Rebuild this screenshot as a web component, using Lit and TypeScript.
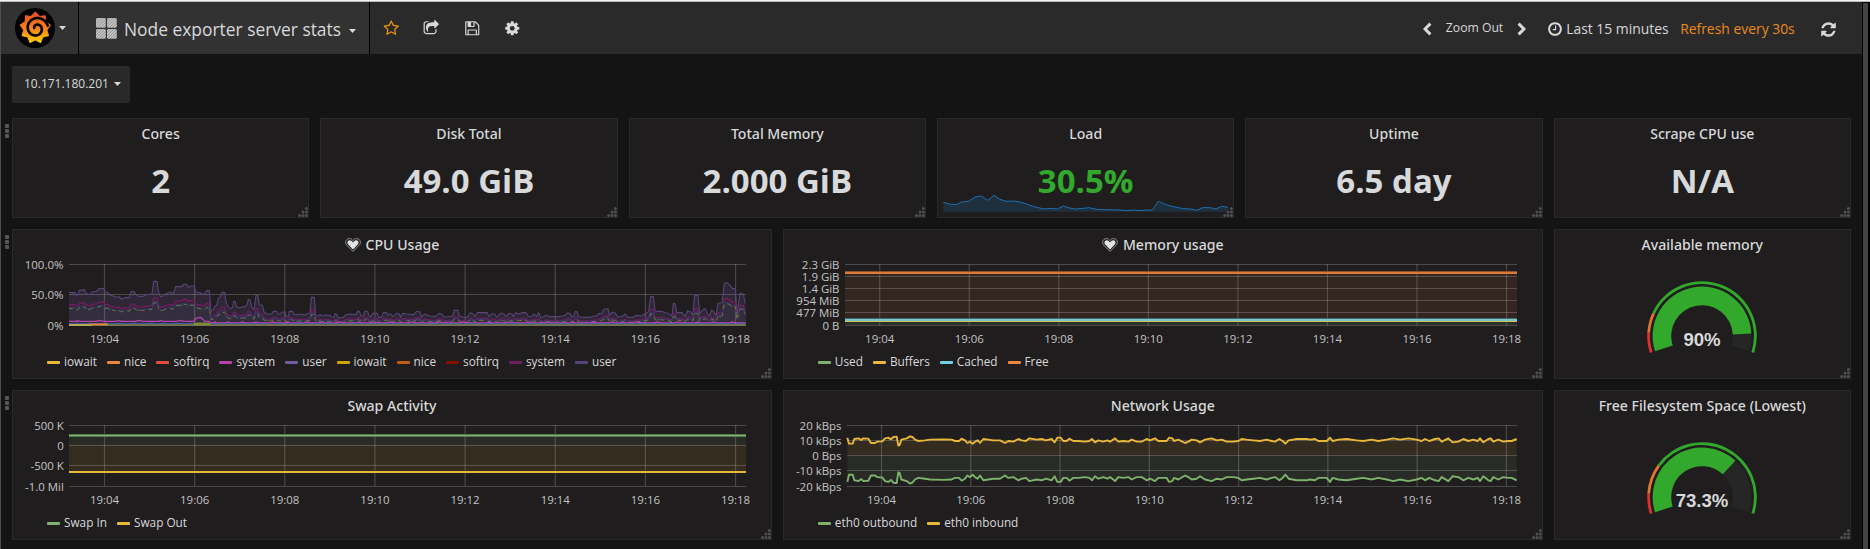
import { LitElement, html, svg, css, nothing } from "lit";

type Pt = [number, number];

const parse = (s: string): Pt[] =>
  s.trim().split(/\s+/).map((p) => p.split(",").map(Number) as Pt);
const shift = (pts: Pt[], dx: number): Pt[] => pts.map(([x, y]) => [x + dx, y] as Pt);
const join = (pts: Pt[]) => pts.map(([x, y]) => `${x.toFixed(2)},${y.toFixed(2)}`).join(" ");

/* FontAwesome glyph outlines, 1792 unit grid */
const ICON = {
  star: "M1201 1004l306-297-422-62-189-382-189 382-422 62 306 297-73 421 378-199 377 199zm527-357q0 22-26 48l-363 354 86 500q1 7 1 20 0 50-41 50-19 0-40-12l-449-236-449 236q-22 12-40 12-21 0-31.5-14.5t-10.5-35.5q0-6 2-20l86-500-364-354q-25-27-25-48 0-37 56-46l502-73 225-455q19-41 49-41t49 41l225 455 502 73q56 9 56 46z",
  share: "M1472 989v259q0 119-84.5 203.5t-203.5 84.5h-832q-119 0-203.5-84.5t-84.5-203.5v-832q0-119 84.5-203.5t203.5-84.5h255q13 0 22.5 9.5t9.5 22.5q0 27-26 32-77 26-133 60-10 4-16 4h-112q-66 0-113 47t-47 113v832q0 66 47 113t113 47h832q66 0 113-47t47-113v-214q0-19 18-29 28-13 54-37 16-16 35-8 21 9 21 29zm237-496l-384 384q-18 19-45 19-12 0-25-5-39-17-39-59v-192h-160q-323 0-438 131-119 137-74 473 3 23-20 34-8 2-12 2-16 0-26-13-10-14-21-31t-39.5-68.5-49.5-99.5-38.5-114-17.5-122q0-49 3.5-91t14-90 28-88 47-81.5 68.5-74 94.5-61.5 124.5-48.5 159.5-30.5 196.5-11h160v-192q0-42 39-59 13-5 25-5 26 0 45 19l384 384q19 19 19 45t-19 45z",
  save: "M512 1536h768v-384h-768v384zm896 0h128v-896q0-14-10-38.5t-20-34.5l-281-281q-10-10-34-20t-39-10v416q0 40-28 68t-68 28h-576q-40 0-68-28t-28-68v-416h-128v1280h128v-416q0-40 28-68t68-28h832q40 0 68 28t28 68v416zm-384-928v-320q0-13-9.5-22.5t-22.5-9.5h-192q-13 0-22.5 9.5t-9.5 22.5v320q0 13 9.5 22.5t22.5 9.5h192q13 0 22.5-9.5t9.5-22.5zm640 32v928q0 40-28 68t-68 28h-1344q-40 0-68-28t-28-68v-1344q0-40 28-68t68-28h928q40 0 88 20t76 48l280 280q28 28 48 76t20 88z",
  cog: "M1152 896q0-106-75-181t-181-75-181 75-75 181 75 181 181 75 181-75 75-181zm512-109v222q0 12-8 23t-20 13l-185 28q-19 54-39 91 35 50 107 138 10 12 10 25t-9 23q-27 37-99 108t-94 71q-12 0-26-9l-138-108q-44 23-91 38-16 136-29 186-7 28-36 28h-222q-14 0-24.5-8.5t-11.5-21.5l-28-184q-49-16-90-37l-141 107q-10 9-25 9-14 0-25-11-126-114-165-168-7-10-7-23 0-12 8-23 15-21 51-66.5t54-70.5q-27-50-41-99l-183-27q-13-2-21-12.5t-8-23.5v-222q0-12 8-23t19-13l186-28q14-46 39-92-40-57-107-138-10-12-10-24 0-10 9-23 26-36 98.5-107.5t94.5-71.5q13 0 26 10l138 107q44-23 91-38 16-136 29-186 7-28 36-28h222q14 0 24.5 8.5t11.5 21.5l28 184q49 16 90 37l142-107q9-9 24-9 13 0 25 10 129 119 165 170 7 8 7 22 0 12-8 23-15 21-51 66.5t-54 70.5q26 50 41 98l183 28q13 2 21 12.5t8 23.5z",
  clock: "M1024 544v448q0 14-9 23t-23 9h-320q-14 0-23-9t-9-23v-64q0-14 9-23t23-9h224v-352q0-14 9-23t23-9h64q14 0 23 9t9 23zm416 352q0-148-73-273t-198-198-273-73-273 73-198 198-73 273 73 273 198 198 273 73 273-73 198-198 73-273zm224 0q0 209-103 385.5t-279.5 279.5-385.5 103-385.5-103-279.5-279.5-103-385.5 103-385.5 279.5-279.5 385.5-103 385.5 103 279.5 279.5 103 385.5z",
  refresh: "M1639 1056q0 5-1 7-64 268-268 434.5t-478 166.5q-146 0-282.5-55t-243.5-157l-129 129q-19 19-45 19t-45-19-19-45v-448q0-26 19-45t45-19h448q26 0 45 19t19 45-19 45l-137 137q71 66 161 102t187 36q134 0 250-65t186-179q11-17 53-117 8-23 30-23h192q13 0 22.5 9.5t9.5 22.5zm25-800v448q0 26-19 45t-45 19h-448q-26 0-45-19t-19-45 19-45l138-138q-148-137-349-137-134 0-250 65t-186 179q-11 17-53 117-8 23-30 23h-199q-13 0-22.5-9.5t-9.5-22.5v-7q65-268 270-434.5t480-166.5q146 0 284 55.5t245 156.5l130-129q19-19 45-19t45 19 19 45z",
};

const fa = (d: string, size = 16.5) =>
  html`<svg class="fa" width=${size} height=${size} viewBox="0 0 1792 1792"><path d=${d} fill="currentColor" /></svg>`;
const caret = html`<svg class="caret" width="7" height="4" viewBox="0 0 7 4"><path d="M0 0H7L3.5 4Z" fill="currentColor" /></svg>`;
const chevron = (flip: boolean) => html`<svg width="9" height="14" viewBox="0 0 9 14">
  <path d=${flip ? "M1.6 1.6L7 7L1.6 12.4" : "M7.4 1.6L2 7L7.4 12.4"} fill="none" stroke="currentColor" stroke-width="3" />
</svg>`;
const heart = html`<svg class="heart" width="16" height="14" viewBox="0 0 16 14">
  <path d="M8 13.4L1.8 7.2C-.4 4.8.6.7 4.4.6 6 .6 7.2 1.3 8 2.6 8.8 1.3 10 .6 11.6.6 15.4.7 16.4 4.8 14.2 7.2Z" fill="none" stroke="#9b9b9b" stroke-width=".9" />
  <path d="M8 11.6L3.2 6.6C1.8 4.9 2.5 2.3 4.7 2.2 6.3 2.2 7.3 3.2 8 4.6 8.7 3.2 9.7 2.2 11.3 2.2 13.5 2.3 14.2 4.9 12.8 6.6Z" fill="#e4e4e4" />
</svg>`;
const grip = html`<svg class="grip" width="10" height="10" viewBox="0 0 10 10" fill="#505050">
  ${([[8.4, 1.6], [8.4, 5], [8.4, 8.4], [5, 5], [5, 8.4], [1.6, 8.4]] as Pt[]).map(
    ([x, y]) => svg`<circle cx=${x} cy=${y} r="1.5" />`
  )}
</svg>`;

/* Logo: toothed flame with a spiral cut into it */
const flame = () => {
  const pts: Pt[] = [];
  const n = 9;
  for (let i = 0; i < n * 2; i++) {
    const a = (-90 + (i * 180) / n) * (Math.PI / 180);
    const r = i % 2 ? 12 : 15.6;
    pts.push([20.3 + r * 0.97 * Math.cos(a), 19.8 + r * Math.sin(a)]);
  }
  return join(pts);
};
const spiral = () => {
  const pts: Pt[] = [];
  for (let t = 0; t <= 1; t += 0.01) {
    const a = -0.35 - (1 - t) * Math.PI * 2.9 + 0.2;
    const r = 2.2 + t * 9.6;
    pts.push([21.4 + r * Math.cos(a), 20.4 + r * Math.sin(a)]);
  }
  return join(pts);
};
const logo = html`<svg width="40" height="40" viewBox="0 0 40 40">
  <defs>
    <linearGradient id="lg" x1="0" y1="0" x2="0" y2="1">
      <stop offset="0" stop-color="#ef4e28" /><stop offset=".5" stop-color="#f47b20" /><stop offset="1" stop-color="#fdca0a" />
    </linearGradient>
  </defs>
  <circle cx="20" cy="20" r="20" fill="#000" />
  <polygon points=${flame()} fill="url(#lg)" stroke="url(#lg)" stroke-width="1.2" stroke-linejoin="round" />
  <polyline points=${spiral()} fill="none" stroke="#000" stroke-width="2.6" stroke-linecap="round" />
</svg>`;

const tiles = html`<svg width="21" height="21" viewBox="0 0 21 21">
  <defs>
    <pattern id="hatch" width="2.1" height="2.1" patternUnits="userSpaceOnUse" patternTransform="rotate(45)">
      <rect width="2.1" height="2.1" fill="#8e8e8e" /><rect width="1.2" height="2.1" fill="#cfcfcf" />
    </pattern>
  </defs>
  ${([[0, 0], [11, 0], [0, 11], [11, 11]] as Pt[]).map(
    ([x, y]) => svg`<rect x=${x} y=${y} width="9.8" height="9.8" rx="1.4" fill="url(#hatch)" />`
  )}
</svg>`;

/* ---- series, traced on a grid of one third of a pixel ---- */
const cpuTop: Pt[] = [
  ...parse(`207,212 226,212 229,220 234,218 238,205 254,203 258,214 270,218 275,210 290,208 296,200 312,200 316,210 325,212 332,220 340,222 348,226 357,224 365,231 375,227 388,227 393,209 403,209 408,218 415,223 430,223 438,218 456,216 461,178 471,178 476,212 482,224 490,222 495,216 505,213 512,210 520,216 527,194 545,194 550,187 560,187 565,196 572,192 582,192 587,210 600,212 606,216 614,216 620,206 628,206 633,266 640,264 645,252 650,250 655,228 660,226 665,211 674,211 678,240 684,254 692,260 698,256 701,238 706,240 710,255 720,257 727,254 735,255 740,250 745,232 750,234 755,256 762,262 768,220 773,220 778,248 787,250 792,270 800,276 815,276 820,268 830,268 835,276 842,276 846,270 855,270 858,282 865,284 868,268 878,268 882,277 893,278 905,276 912,280 920,276 930,274 934,226 943,226 947,280 955,282 960,277 967,282 975,279 988,280 995,284 1002,286 1005,275 1010,276 1015,288 1030,286 1037,278 1050,276 1062,278 1068,278 1073,267 1078,268 1083,282 1090,282 1094,268 1103,268 1106,280 1112,286 1118,274 1132,274 1136,286 1145,286 1150,272 1160,272 1164,280`),
  ...shift(parse(`0,275 10,284 20,274 28,276 32,286 38,274 50,276 70,278 80,268 90,270 95,286 103,276 120,282 135,284 148,274 158,278 163,286 188,282 192,265 204,265 208,282 220,286 232,286 240,272 250,276 255,284 262,272 292,272 297,284 305,276 314,276 320,286 332,274 342,276 348,284 356,274 366,276 370,284 378,272 388,276 396,272 408,272 414,282 424,284 432,276 440,284 446,272 452,286 462,284 468,280 480,284 496,284 510,284 525,280 534,272 542,276 546,286 552,280 556,268 562,270 566,284 580,286 600,286 612,282 620,282 626,274 634,276 642,262 654,260 658,280 666,270 676,274 684,286 698,282 706,276 714,286 730,286 740,280 755,282 768,274 776,268 782,224 790,224 795,266 800,268 815,268 825,272 835,274 846,282 850,244 856,246 860,272 876,272 885,284 893,266 902,270 908,280 914,220 924,220 929,276 938,264 946,260 952,275 958,282 965,264 972,270 978,282 984,244 996,242 1003,184 1012,182 1020,190 1027,200 1036,200 1041,278 1050,214 1060,216 1065,242 1067,242`), 1170),
].map(([x, y]) => [x / 3, 222 + y / 3] as Pt);
const CPU_BASE = 325.3;
const scaled = (early: number, late: number): Pt[] =>
  cpuTop.map(([x, y]) => [x, CPU_BASE - (CPU_BASE - y) * (x < 211 || x > 722 ? early : late)] as Pt);
const cpuSystem2 = scaled(0.63, 0.55);
const cpuSoft2 = scaled(0.54, 0.45);
const cpuWait2 = scaled(0.51, 0.39);
const cpuSystem1 = cpuTop.map(([x, y], i) => [x, CPU_BASE - (x < 211 ? 3.9 : 2.4) - (i % 7 === 3 ? 1 : 0) - (x > 194 && x < 204 ? 3 : 0)] as Pt);
const cpuBlue = cpuTop.map(([x], i) => [x, CPU_BASE - 1.4 - (i % 5 === 2 ? 0.7 : 0)] as Pt);

const netIn: Pt[] = [
  ...parse(`232,158 237,176 248,176 253,162 266,160 274,165 280,160 295,161 303,174 315,174 322,170 337,169 345,160 355,158 363,163 370,156 380,155 385,182 389,180 394,164 410,160 420,154 427,156 435,164 445,168 465,166 480,164 520,163 545,164 555,168 567,168 575,161 585,166 592,174 600,170 608,176 615,170 623,166 630,174 640,162 655,164 670,166 690,166 705,174 715,168 730,170 745,162 755,166 768,168 778,160 800,164 815,162 828,166 845,162 854,172 862,158 872,158 880,168 890,168 898,161 910,168 925,168 945,170 958,168 966,162 975,172 985,166 1000,170 1012,166 1020,170 1035,160 1045,170 1060,168 1075,170 1085,164 1100,170 1115,170 1130,162 1140,166 1155,160 1165,168`),
  ...shift(parse(`0,168 20,168 27,158 37,160 42,168 55,164 75,174 85,170 95,164 110,166 120,172 135,164 155,160 170,166 185,164 200,170 220,170 235,168 245,162 260,164 280,166 300,168 320,164 335,168 345,170 358,162 368,168 376,176 386,166 410,162 440,162 450,164 465,162 475,168 500,168 510,158 518,168 535,164 560,162 590,166 610,168 635,164 655,168 680,164 700,160 720,164 745,160 770,164 785,168 795,162 808,168 825,162 836,160 845,170 865,160 878,172 895,170 910,162 925,168 940,164 953,168 960,160 970,172 985,162 992,160 1000,170 1015,164 1030,170 1045,168 1055,168 1070,162`), 1170),
].map(([x, y]) => [770 + x / 3, 385 + y / 3] as Pt);
const netOut = netIn.map(([x, y]) => [x, 478.5 - (y - 440.5) * 1.2] as Pt);

const load: Pt[] = parse(`130,292 148,297 168,299 186,291 206,289 225,276 244,273 263,286 282,271 300,283 318,289 340,288 360,291 380,297 398,304 415,308 433,312 450,310 472,312 490,303 508,309 528,312 548,310 568,308 588,313 605,314 660,315 682,317 700,315 718,317 738,315 757,315 775,289 793,297 812,303 830,307 850,311 872,312 890,316 908,308 930,308 948,312 965,304 984,307`).map(
  ([x, y]) => [900 + x / 3, 105 + y / 3] as Pt
);

const line = (pts: Pt[], color: string, w = 1) =>
  svg`<polyline points=${join(pts)} fill="none" stroke=${color} stroke-width=${w} stroke-linejoin="round" />`;
const area = (pts: Pt[], base: number, color: string, o = 1) =>
  svg`<polygon points=${join([[pts[0][0], base], ...pts, [pts[pts.length - 1][0], base]])} fill=${color} fill-opacity=${o} />`;
const flat = (x0: number, x1: number, y: number, color: string, w = 2) =>
  svg`<rect x=${x0} y=${y - w / 2} width=${x1 - x0} height=${w} fill=${color} />`;

interface Axis { left: number; right: number; ys: number[]; labels: string[]; labelX: number; first: number; step: number; }

const times = ["19:04", "19:06", "19:08", "19:10", "19:12", "19:14", "19:16", "19:18"];

const plot = (ox: number, oy: number, a: Axis, series: unknown) => html`
  <svg class="plot" width="757" height="90" viewBox="${ox} ${oy} 757 90">
    ${series}
    ${a.ys.map((y, i) => svg`<text class="axis" x=${a.labelX} y=${y + 4.4} text-anchor="end">${a.labels[i]}</text>`)}
    ${times.map((t, i) => svg`<text class="axis" x=${a.first + i * a.step} y=${oy + 84} text-anchor="middle">${t}</text>`)}
  </svg>`;

const grid = (a: Axis) => {
  const top = Math.floor(a.ys[0]);
  const bottom = a.ys[a.ys.length - 1];
  return svg`
    ${times.map((_, i) => svg`<rect x=${a.first + i * a.step - 0.6} y=${top} width="1.2" height=${bottom - top} fill="#fff" fill-opacity=".18" />`)}
    ${a.ys.map((y) => svg`<rect x=${a.left} y=${Math.floor(y)} width=${a.right - a.left} height="1" fill="#fff" fill-opacity=".2" />`)}`;
};

const legend = (items: [string, string][]) => html`<div class="legend">
  ${items.map(([name, color]) => html`<span class="key"><i class="swatch" style="background:${color}"></i>${name}</span>`)}
</div>`;

const cpuAxis: Axis = { left: 69, right: 746, ys: [264.3, 294.3, 325.3], labels: ["100.0%", "50.0%", "0%"], labelX: 63.4, first: 104.5, step: 90.15 };
const memAxis: Axis = { left: 845, right: 1517, ys: [264.3, 276.3, 288.3, 300.3, 312.3, 325.3], labels: ["2.3 GiB", "1.9 GiB", "1.4 GiB", "954 MiB", "477 MiB", "0 B"], labelX: 839.5, first: 879.7, step: 89.55 };
const swapAxis: Axis = { left: 69, right: 746, ys: [425.3, 445.3, 465.3, 486.3], labels: ["500 K", "0", "-500 K", "-1.0 Mil"], labelX: 63.8, first: 104.5, step: 90.15 };
const netAxis: Axis = { left: 847, right: 1517, ys: [425.3, 440.3, 455.3, 470.3, 486.3], labels: ["20 kBps", "10 kBps", "0 Bps", "-10 kBps", "-20 kBps"], labelX: 841.5, first: 881.5, step: 89.27 };

const cpuChart = plot(13, 259, cpuAxis, svg`
  ${area(cpuTop, CPU_BASE, "#584477", 0.28)}
  ${area(cpuSystem2, CPU_BASE, "#701030", 0.3)}
  ${area(cpuSoft2, CPU_BASE, "#332d40")}
  ${grid(cpuAxis)}
  ${line(cpuTop, "#584477", 1.1)}
  ${line(cpuSystem2, "#6d1f62", 1.3)}
  ${line(cpuSoft2, "#1f4272", 1)}
  <polyline points=${join(cpuWait2)} fill="none" stroke="#7f6a3a" stroke-width="1" stroke-dasharray="4 4" />
  <polyline points=${join(cpuWait2)} fill="none" stroke="#4f7a3c" stroke-width="1" stroke-dasharray="2 9" />
  ${line(cpuSystem1, "#ba43a9", 1.3)}
  ${line(cpuBlue, "#4a6fc0", 1)}
  ${flat(69, 746, 325, "#8a9150", 1.2)}
  ${flat(69, 92, 325, "#d3c24a", 1.4)}
  ${flat(90, 108, 324.3, "#ef843c", 1.6)}
  ${flat(194, 210, 323.8, "#7e8f32", 2.4)}`);

const memChart = plot(784, 259, memAxis, svg`
  <rect x="845" y="272" width="672" height="48" fill="#33251f" />
  <rect x="845" y="320" width="672" height="5" fill="#2b2f29" />
  ${grid(memAxis)}
  ${flat(845, 1517, 272.5, "#8c4f28", 3)}
  ${flat(845, 1517, 273, "#ef843c", 1.6)}
  ${flat(845, 1517, 318.8, "#3f7280", 1.4)}
  ${flat(845, 1517, 320, "#7cc6c4", 2)}
  ${flat(845, 1517, 321.5, "#c9c15a", 1)}`);

const swapChart = plot(13, 420, swapAxis, svg`
  <rect x="69" y="435" width="677" height="10" fill="#292c26" />
  <rect x="69" y="445" width="677" height="27" fill="#352c20" />
  ${grid(swapAxis)}
  ${flat(69, 746, 435.5, "#4c6d45", 3)}
  ${flat(69, 746, 435.5, "#7eb26d", 1.4)}
  ${flat(69, 746, 472, "#eab839", 2)}`);

const netChart = plot(784, 420, netAxis, svg`
  ${area(netIn, 455.3, "#352c20")}
  ${area(netOut, 455.3, "#292c26")}
  ${grid(netAxis)}
  ${line(netIn, "#eab839", 1.9)}
  ${line(netOut, "#7eb26d", 1.9)}`);

/* Gauges sweep 216 degrees, starting 18 degrees under the horizontal */
const ring = (r0: number, r1: number, from: number, to: number, color: string) => {
  const p = (r: number, f: number) => {
    const a = ((198 - 216 * f) * Math.PI) / 180;
    return `${(r * Math.cos(a)).toFixed(2)} ${(-r * Math.sin(a)).toFixed(2)}`;
  };
  const big = (to - from) * 216 > 180 ? 1 : 0;
  return svg`<path fill=${color} d="M${p(r1, from)}A${r1} ${r1} 0 ${big} 1 ${p(r1, to)}L${p(r0, to)}A${r0} ${r0} 0 ${big} 0 ${p(r0, from)}Z" />`;
};
const gauge = (value: number, label: string, warn: number) => html`<svg class="gauge" width="120" height="80" viewBox="-60 -60 120 80">
  ${ring(30.8, 49.4, 0, 1, "#262626")}
  ${ring(30.8, 49.4, 0, value, "#32a82c")}
  ${ring(52, 54.8, 0, 0.1, "#e02f30")}
  ${ring(52, 54.8, 0.1, warn, "#e0752d")}
  ${ring(52, 54.8, warn, 1, "#32a82c")}
  <text class="gauge-value" x="0" y="10.3" text-anchor="middle">${label}</text>
</svg>`;

const panel = (title: string, body: unknown, opts: { alert?: boolean; wide?: boolean } = {}) => html`
  <div class="cell ${opts.wide ? "wide" : ""}">
    <section class="panel">
      <h2 class="title">${opts.alert ? heart : nothing}${title}</h2>
      ${body}${grip}
    </section>
  </div>`;

const stat = (value: string) => html`<div class="stat">${value}</div>`;
const handle = html`<div class="handle"><i></i><i></i><i></i></div>`;

class AppRoot extends LitElement {
  static styles = css`
    :host { display: flex; flex-direction: column; height: 549px; overflow: hidden; background: #141414; color: #d8d9da; font-family: "Open Sans", "Noto Sans", sans-serif; font-size: 14px; }
    svg { display: block; flex: none; }
    .window-edge { flex: none; height: 1px; background: #f2f3f3; border-bottom: 1px solid #b6bcbb; }
    .window { flex: 1; display: flex; min-height: 0; }
    .page { flex: 1; border-left: 1px solid #4a5050; min-width: 0; }
    .scroll { width: 8px; box-sizing: border-box; border: 1px solid #000; border-bottom: 0; border-right-width: 2px; background: #434343; }
    .nav { display: flex; height: 52px; background: #2a2a2a; }
    .brand, .dash { display: flex; align-items: center; box-sizing: border-box; background: #323232; border-right: 1px solid #000; }
    .brand { width: 78px; padding-left: 14px; gap: 4px; }
    .dash { width: 291px; padding-left: 17px; }
    .dash-name { font-size: 17.4px; margin: 0 8px 0 7px; line-height: 24px; padding-top: 1px; }
    .dash .caret { margin-top: 6px; }
    .tools { display: flex; align-items: center; padding: 0 0 0 13px; gap: 23.8px; margin-top: 1px; }
    .star { color: #eb9b13; }
    .time { margin-left: auto; display: flex; align-items: center; padding-right: 25.3px; height: 54px; }
    .zoom { font-size: 12.2px; margin: 0 14px 0 14px; line-height: 18px; padding-bottom: 2px; }
    .range { font-size: 13.9px; margin-left: 3.5px; line-height: 20px; }
    .every { font-size: 13.9px; color: #eb8b1b; margin: 0 25px 0 11.5px; line-height: 20px; }
    .range-icon { margin-left: 20.5px; }
    .variables { padding: 12px 0 15px 11px; }
    .variable { display: inline-flex; align-items: center; gap: 5.5px; box-sizing: border-box; width: 118px; height: 37px; padding: 0 0 1px 12px; background: #292929; border-radius: 2px; font-size: 12px; line-height: 18px; vertical-align: top; }
    .row { display: grid; grid-template-columns: 11px repeat(12, 1fr); margin-bottom: 11px; }
    .graphs { height: 150px; }
    .stats { height: 100px; }
    .cell { grid-column: span 2; padding-right: 11px; min-width: 0; }
    .cell.wide { grid-column: span 5; }
    .panel { position: relative; height: 100%; box-sizing: border-box; background: #1f1d1d; border: 1px solid #292929; }
    .title { display: flex; justify-content: center; align-items: center; gap: 5px; margin: 0; height: 29px; box-sizing: border-box; font-family: "Noto Sans", "Open Sans", sans-serif; font-weight: 500; font-size: 14.1px; line-height: 20px; }
    .grip { position: absolute; right: 0; bottom: 0; }
    .stat { text-align: center; font-weight: 700; font-size: 33px; line-height: 66px; }
    .load { display: grid; }
    .load .stat { grid-area: 1 / 1; color: #32a82c; }
    .spark { grid-area: 1 / 1; }
    .plot { overflow: visible; }
    .handle { display: flex; flex-direction: column; gap: 1px; padding: 6px 0 0 4px; }
    .handle i { width: 4px; height: 4px; border-radius: 1px; background: #565656; }
    .legend { display: flex; gap: 10px; padding-left: 34px; height: 24px; align-items: center; font-size: 11.8px; line-height: 16px; }
    .key { display: flex; align-items: center; gap: 4px; }
    .swatch { width: 13px; height: 3px; border-radius: 1px; margin-top: 2px; }
    .axis { font: 11.45px "Open Sans", sans-serif; fill: #c4c4c4; }
    .gauge { margin: 17px auto 0; }
    .gauge-value { font: 700 18.6px "Liberation Sans", Arial, sans-serif; fill: #d8d9da; }
  `;

  render() {
    return html`
      <div class="window-edge"></div>
      <div class="window">
        <div class="page">
          <nav class="nav">
            <div class="brand">${logo}${caret}</div>
            <div class="dash">${tiles}<span class="dash-name">Node exporter server stats</span>${caret}</div>
            <div class="tools">
              <span class="star">${fa(ICON.star)}</span>${fa(ICON.share)}${fa(ICON.save)}${fa(ICON.cog)}
            </div>
            <div class="time">
              ${chevron(false)}<span class="zoom">Zoom Out</span>${chevron(true)}
              <span class="range-icon">${fa(ICON.clock, 16)}</span>
              <span class="range">Last 15 minutes</span>
              <span class="every">Refresh every 30s</span>
              ${fa(ICON.refresh, 17)}
            </div>
          </nav>
          <div class="variables"><div class="variable">10.171.180.201 ${caret}</div></div>
          <div class="row stats">
            ${handle}
            ${panel("Cores", stat("2"))}
            ${panel("Disk Total", stat("49.0 GiB"))}
            ${panel("Total Memory", stat("2.000 GiB"))}
            ${panel("Load", html`<div class="load">
              <svg class="spark" width="295" height="68" viewBox="938 148 295 68">
                ${area(load, 211.7, "#1f78c1", 0.2)}${line(load, "#1f70b4", 1)}
              </svg>
              ${stat("30.5%")}
            </div>`)}
            ${panel("Uptime", stat("6.5 day"))}
            ${panel("Scrape CPU use", stat("N/A"))}
          </div>
          <div class="row graphs">
            ${handle}
            ${panel("CPU Usage", html`${cpuChart}${legend([["iowait", "#eab839"], ["nice", "#ef843c"], ["softirq", "#e24d42"], ["system", "#ba43a9"], ["user", "#705da0"], ["iowait", "#cca300"], ["nice", "#c15c17"], ["softirq", "#890f02"], ["system", "#6d1f62"], ["user", "#584477"]])}`, { alert: true, wide: true })}
            ${panel("Memory usage", html`${memChart}${legend([["Used", "#7eb26d"], ["Buffers", "#eab839"], ["Cached", "#6ed0e0"], ["Free", "#ef843c"]])}`, { alert: true, wide: true })}
            ${panel("Available memory", gauge(0.903, "90%", 0.2))}
          </div>
          <div class="row graphs">
            ${handle}
            ${panel("Swap Activity", html`${swapChart}${legend([["Swap In", "#7eb26d"], ["Swap Out", "#eab839"]])}`, { wide: true })}
            ${panel("Network Usage", html`${netChart}${legend([["eth0 outbound", "#7eb26d"], ["eth0 inbound", "#eab839"]])}`, { wide: true })}
            ${panel("Free Filesystem Space (Lowest)", gauge(0.697, "73.3%", 0.25))}
          </div>
        </div>
        <div class="scroll"></div>
      </div>
    `;
  }
}
customElements.define("app-root", AppRoot);
